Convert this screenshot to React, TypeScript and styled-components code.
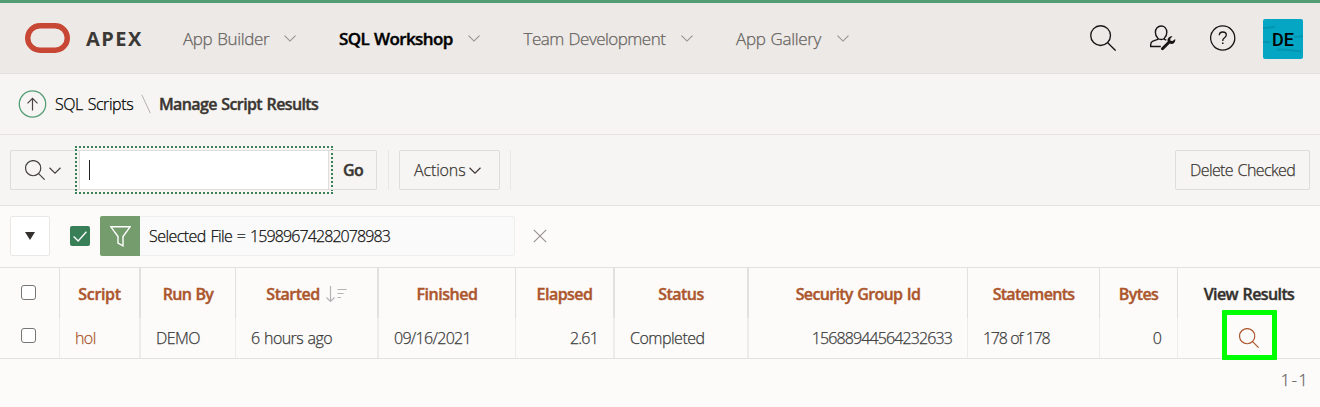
import React from 'react';
import styled, { createGlobalStyle, css } from 'styled-components';

const GlobalStyle = createGlobalStyle`
  *, *::before, *::after { box-sizing: border-box; }
  body {
    margin: 0;
    background: #fcfbf9;
    color: #3a3a3a;
    font-family: "Open Sans", "Noto Sans", sans-serif;
    font-size: 16px;
    font-weight: 300;
    line-height: 20px;
  }
  svg { display: block; flex: none; }
`;

const Label = styled.span<{ $track?: number; $strong?: boolean }>`
  white-space: nowrap;
  word-spacing: 1px;
  letter-spacing: ${p => p.$track ?? 0}px;
  ${p => p.$strong
    ? css`font-weight: 600; -webkit-text-stroke: 0.4px currentColor;`
    : css`font-weight: 300; -webkit-text-stroke: 0.25px currentColor;`}
`;

const Page = styled.div`
  position: relative;
  width: 1320px;
  height: 407px;
  overflow: hidden;
  background: #fcfbf9;
`;

const Header = styled.header`
  display: flex;
  align-items: center;
  height: 74px;
  padding: 0 17px 1px 25px;
  background: #ece9e6;
  border-top: 3px solid #549d74;
  border-bottom: 1px solid #e1dedb;
`;

const Brand = styled.div`
  display: flex;
  align-items: center;
  gap: 16px;
  width: 158px;
  color: #3b3835;
  font-size: 20px;
`;

const BrandName = styled.span`
  padding-top: 2px;
  font-weight: 700;
  letter-spacing: 1.5px;
`;

const Nav = styled.nav`
  display: flex;
  flex: 1;
  padding-top: 2px;
  font-size: 17px;
`;

const NavItem = styled.a<{ $width: number; $active?: boolean }>`
  display: flex;
  align-items: center;
  width: ${p => p.$width}px;
  color: ${p => (p.$active ? '#000' : '#67635f')};
`;

const NavText = styled.span<{ $width: number }>`
  width: ${p => p.$width}px;
`;

const HeaderTools = styled.div`
  display: flex;
  align-items: center;
  gap: 34px;
  color: #161513;
`;

const Avatar = styled.div`
  position: relative;
  display: grid;
  place-items: center;
  width: 40px;
  height: 40px;
  margin: 2px 0 0 -7px;
  border-radius: 2px;
  background: #04a6c3;
  color: #000;
  font: 500 18px "Roboto", sans-serif;
  overflow: hidden;
  svg { position: absolute; inset: 0; }
  span { position: relative; top: 1px; }
`;

const Breadcrumb = styled.div`
  display: flex;
  align-items: center;
  height: 61px;
  padding-left: 18px;
  background: #f6f5f3;
  border-bottom: 1px solid #e5e2df;
  color: #3a3632;
`;

const Crumb = styled.a`
  width: 86px;
  margin-left: 8px;
  color: #000;
`;

const Slash = styled.svg`
  margin-right: 8px;
`;

const Toolbar = styled.div`
  display: flex;
  align-items: center;
  height: 71px;
  padding: 0 10px;
  background: #f6f5f3;
  border-bottom: 1px solid #e5e3e1;
`;

const SearchPicker = styled.button`
  display: flex;
  align-items: center;
  gap: 4px;
  width: 69px;
  height: 40px;
  padding: 0 0 0 14px;
  border: 1px solid #dedddb;
  border-right: 0;
  border-radius: 2px 0 0 2px;
  background: transparent;
  color: #45423f;
`;

const SearchField = styled.div`
  display: flex;
  align-items: center;
  width: 250px;
  height: 40px;
  padding-left: 9px;
  border: 1px solid #dedddb;
  background: #fff;
  outline: 2px dotted #3a8058;
  outline-offset: 2px;
`;

const Caret = styled.i`
  width: 1px;
  height: 20px;
  background: #222;
`;

const Button = styled.button<{ $width: number; $attached?: boolean }>`
  display: flex;
  align-items: center;
  gap: 4px;
  width: ${p => p.$width}px;
  height: 40px;
  padding: 0 0 0 14px;
  border: 1px solid #dedddb;
  border-left-width: ${p => (p.$attached ? 0 : 1)}px;
  border-radius: ${p => (p.$attached ? '0 2px 2px 0' : '2px')};
  background: transparent;
  color: #3a3632;
  font: inherit;
`;

const Divider = styled.i`
  width: 1px;
  height: 40px;
  margin: 0 10px 0 11px;
  background: #e8e7e5;
  &:last-of-type { margin-left: 10px; }
`;

const Spacer = styled.div`
  flex: 1;
`;

const FilterBar = styled.div`
  display: flex;
  align-items: center;
  height: 61px;
  padding: 0 0 1px 10px;
`;

const Disclosure = styled.button`
  display: grid;
  place-items: center;
  width: 40px;
  height: 40px;
  padding: 0;
  border: 1px solid #e9e8e6;
  border-radius: 2px;
  background: #fff;
`;

const FilterToggle = styled.div`
  display: grid;
  place-items: center;
  width: 20px;
  height: 20px;
  margin: 0 10px 0 20px;
  border-radius: 2px;
  background: #387f57;
`;

const FilterChip = styled.div`
  display: flex;
  width: 415px;
  height: 40px;
  margin-right: 18px;
  color: #101010;
`;

const FilterIcon = styled.div`
  display: grid;
  place-items: center;
  width: 40px;
  border-radius: 2px 0 0 2px;
  background: #759c6c;
`;

const FilterText = styled.div`
  display: flex;
  align-items: center;
  flex: 1;
  padding-left: 9px;
  border: 1px solid #efefed;
  border-left: 0;
  border-radius: 0 2px 2px 0;
  background: #fafafa;
`;

const rowGrid = css`
  display: grid;
  grid-template-columns: 60px 81px 95px 143px 137px 99px 134px 219px 132px 78px 142px;
`;

const HeadRow = styled.div`
  ${rowGrid}
  height: 51px;
  border-top: 1px solid #e2e1df;
`;

const DataRow = styled.div`
  ${rowGrid}
  height: 41px;
  border-bottom: 1px solid #e2e1df;
`;

const HeadCell = styled.div<{ $rule?: number; $plain?: boolean }>`
  display: flex;
  align-items: center;
  justify-content: center;
  gap: 6px;
  padding-top: 1px;
  border-right: ${p => p.$rule ?? 0}px solid #e2e1df;
  color: ${p => (p.$plain ? '#33302d' : '#ac562d')};
`;

const DataCell = styled.div<{ $rule?: number; $align?: string }>`
  display: flex;
  align-items: center;
  justify-content: ${p => p.$align ?? 'flex-start'};
  padding: 0 15px;
  border-right: ${p => p.$rule ?? 0}px solid #edecea;
`;

const CheckBox = styled.span<{ $lift?: boolean }>`
  flex: none;
  width: 15px;
  height: 15px;
  margin: ${p => (p.$lift ? '0 2px 5px 0' : '0 2px 2px 0')};
  border: 1.4px solid #767676;
  border-radius: 3px;
  background: #fff;
`;

const ScriptLink = styled.a`
  color: #ac562d;
`;

const Footer = styled.div`
  display: flex;
  justify-content: flex-end;
  padding: 11px 14px 0 0;
  color: #65615e;
`;

const Highlight = styled.div`
  position: absolute;
  left: 1222px;
  top: 310px;
  width: 55px;
  height: 50px;
  border: 5px solid #00ff00;
  border-radius: 1px;
`;

const Magnifier = ({ size, color = 'currentColor', weight = 1.3 }: { size: number; color?: string; weight?: number }) => (
  <svg width={size} height={size} viewBox="0 0 25 25" fill="none" stroke={color} strokeWidth={weight}>
    <circle cx="10.2" cy="10.2" r="9.5" />
    <path d="M17 17l7.6 7.6" />
  </svg>
);

const Chevron = ({ color = 'currentColor', weight = 1.1 }: { color?: string; weight?: number }) => (
  <svg width="12" height="7" viewBox="0 0 12 7" fill="none" stroke={color} strokeWidth={weight}>
    <path d="M.5 .7L6 6.1 11.500 .7" />
  </svg>
);

const UserWrench = () => (
  <svg width="26" height="26" viewBox="0 0 26 26" fill="none" stroke="#161513" strokeWidth="1.4">
    <path d="M7.900 13.200C6.300 11.800 5.400 9.900 5.400 7.400 5.400 3.500 7.900 1 11.100 1s5.700 2.500 5.700 6.400c0 2.500-.9 4.400-2.500 5.800" />
    <path d="M7.900 13v1.300L2.900 16.200C1.400 16.800.7 18 .7 19.600v1.900H10.800M14.300 13v1.300l2 .8M8 13.500c2 1.200 4.300 1.200 6.300 0" />
    <path fill="#161513" stroke="none" d="M22.600 11.300l-2.400 2.400.3 2.100 2.100.3 2.600-2.200c.5 2.500-.9 4.700-3.300 5-.8.1-1.500 0-2.100-.3l-6.300 6.200c-.6.6-1.500.6-2.100 0s-.6-1.500 0-2.100l6.300-6.200c-.8-2.600 1.300-5.600 4.900-5.200z" />
  </svg>
);

const Help = () => (
  <svg width="26" height="26" viewBox="0 0 26 26" fill="none" stroke="#161513" strokeWidth="1.3">
    <circle cx="12.700" cy="13" r="12.100" />
    <path d="M9.300 10.300C9.300 8.300 10.700 7 12.800 7s3.500 1.300 3.500 3.100c0 2.400-3.500 2.700-3.500 5.100v.9" />
    <path d="M12 18.200h1.500" strokeWidth="1.500" />
  </svg>
);

const SortDescending = () => (
  <svg width="21" height="18" viewBox="0 0 21 18" fill="none" stroke="#b5b2b8" strokeWidth="1.200">
    <path d="M4.500 1v15.500M.5 12.500l4 4 4-4M11.500 4.500h9M11.500 8.500h6M11.500 12.500h3.500" />
  </svg>
);

type NavEntry = { text: string; track: number; textWidth: number; width: number; active?: boolean };

const navEntries: NavEntry[] = [
  { text: 'App Builder', track: -0.38, textWidth: 101, width: 156 },
  { text: 'SQL Workshop', track: -0.6, textWidth: 129, width: 184.5, active: true },
  { text: 'Team Development', track: -0.52, textWidth: 157.5, width: 212.5 },
  { text: 'App Gallery', track: -0.33, textWidth: 101, width: 130 },
];

type Column = { text: string; track: number; rule?: number; sorted?: boolean; plain?: boolean };

const columns: Column[] = [
  { text: 'Script', track: -0.35, rule: 2 },
  { text: 'Run By', track: -0.75, rule: 1 },
  { text: 'Started', track: -0.5, rule: 2, sorted: true },
  { text: 'Finished', track: -0.45, rule: 1 },
  { text: 'Elapsed', track: -0.55, rule: 2 },
  { text: 'Status', track: -0.55, rule: 2 },
  { text: 'Security Group Id', track: -0.67, rule: 1 },
  { text: 'Statements', track: -0.7, rule: 1 },
  { text: 'Bytes', track: -0.6, rule: 1 },
  { text: 'View Results', track: -0.6, plain: true },
];

export default function App() {
  return (
    <>
      <GlobalStyle />
      <Page>
        <Header>
          <Brand>
            <svg width="45" height="30" viewBox="0 0 45 30" fill="none" stroke="#c74634" strokeWidth="5.400">
              <rect x="2.700" y="2.700" width="39.600" height="24.600" rx="12.300" />
            </svg>
            <BrandName>APEX</BrandName>
          </Brand>
          <Nav>
            {navEntries.map(n => (
              <NavItem key={n.text} $width={n.width} $active={n.active}>
                <NavText $width={n.textWidth}>
                  <Label $strong={n.active} $track={n.track}>{n.text}</Label>
                </NavText>
                <Chevron color="#96928e" />
              </NavItem>
            ))}
          </Nav>
          <HeaderTools>
            <Magnifier size={26} />
            <UserWrench />
            <Help />
            <Avatar>
              <svg width="40" height="40" viewBox="0 0 40 40" fill="none" stroke="#0295b0" strokeWidth="2">
                <path d="M0 9q6 0 12-1.500M0 23h7M31 18q5 0 9-1M14 30.500q12 0 24 2" />
              </svg>
              <span>DE</span>
            </Avatar>
          </HeaderTools>
        </Header>

        <Breadcrumb>
          <svg width="29" height="29" viewBox="0 0 29 29" fill="none">
            <circle cx="14.500" cy="14" r="13.200" stroke="#549d74" strokeWidth="1.300" />
            <path d="M14.500 20.500V8.500M9.500 13.300l5-5 5 5" stroke="#4a4340" strokeWidth="1.200" />
          </svg>
          <Crumb><Label $track={-0.42}>SQL Scripts</Label></Crumb>
          <Slash width="10" height="20" viewBox="0 0 10 20" fill="none" stroke="#b5b1ae">
            <path d="M.8 .8L9.300 19.200" />
          </Slash>
          <Label $strong $track={-0.62}>Manage Script Results</Label>
        </Breadcrumb>

        <Toolbar>
          <SearchPicker>
            <Magnifier size={20} weight={1.5} />
            <Chevron weight={1.2} />
          </SearchPicker>
          <SearchField><Caret /></SearchField>
          <Button $width={48} $attached><Label $strong $track={-0.5}>Go</Label></Button>
          <Divider />
          <Button $width={101}>
            <Label $track={-0.14}>Actions</Label>
            <Chevron weight={1.2} />
          </Button>
          <Divider />
          <Spacer />
          <Button $width={135}><Label $track={-0.6}>Delete Checked</Label></Button>
        </Toolbar>

        <FilterBar>
          <Disclosure>
            <svg width="10" height="8" viewBox="0 0 10 8"><path d="M0 0h10L5 8z" fill="#33302d" /></svg>
          </Disclosure>
          <FilterToggle>
            <svg width="14" height="11" viewBox="0 0 14 11" fill="none" stroke="#fff" strokeWidth="1.300">
              <path d="M.6 5.500l4.600 4.500L13.400 .8" />
            </svg>
          </FilterToggle>
          <FilterChip>
            <FilterIcon>
              <svg width="21" height="21" viewBox="0 0 21 21" fill="none" stroke="#fff" strokeWidth="1.400">
                <path d="M.9 .8h19.200L13 10.500v9.300l-5-2.600v-6.700z" />
              </svg>
            </FilterIcon>
            <FilterText>
              <Label $track={-0.55}>Selected File =&nbsp;</Label>
              <Label $track={-0.9}>15989674282078983</Label>
            </FilterText>
          </FilterChip>
          <svg width="14" height="14" viewBox="0 0 14 14" fill="none" stroke="#94918e" strokeWidth="1.100">
            <path d="M.8 .8l12.400 12.400M13.200 .8L.8 13.200" />
          </svg>
        </FilterBar>

        <HeadRow>
          <HeadCell $rule={1}><CheckBox /></HeadCell>
          {columns.map(c => (
            <HeadCell key={c.text} $rule={c.rule} $plain={c.plain}>
              <Label $strong $track={c.track}>{c.text}</Label>
              {c.sorted && <SortDescending />}
            </HeadCell>
          ))}
        </HeadRow>
        <DataRow>
          <DataCell $rule={1} $align="center"><CheckBox $lift /></DataCell>
          <DataCell $rule={2}><ScriptLink><Label $track={-0.6}>hol</Label></ScriptLink></DataCell>
          <DataCell $rule={1}><Label $track={-0.55}>DEMO</Label></DataCell>
          <DataCell $rule={2}><Label $track={-0.6}>6 hours ago</Label></DataCell>
          <DataCell $rule={1}><Label $track={-0.7}>09/16/2021</Label></DataCell>
          <DataCell $rule={2} $align="flex-end"><Label $track={-0.8}>2.61</Label></DataCell>
          <DataCell $rule={2}><Label $track={-0.5}>Completed</Label></DataCell>
          <DataCell $rule={1} $align="flex-end"><Label $track={-0.88}>15688944564232633</Label></DataCell>
          <DataCell $rule={1}><Label $track={-1.3}>178 of 178</Label></DataCell>
          <DataCell $rule={1} $align="flex-end"><Label>0</Label></DataCell>
          <DataCell $align="center"><Magnifier size={20} weight={1.5} color="#ac562d" /></DataCell>
        </DataRow>
        <Footer><Label $track={-1.7}>1 - 1</Label></Footer>
        <Highlight />
      </Page>
    </>
  );
}
